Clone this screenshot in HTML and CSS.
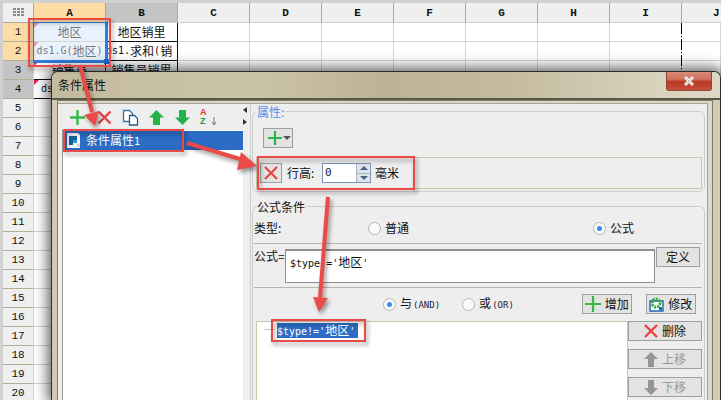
FILE: index.html
```html
<!DOCTYPE html>
<html lang="zh">
<head>
<meta charset="utf-8">
<title>条件属性</title>
<link rel="stylesheet" href="styles.css">
</head>
<body>
<div class="sheet">
  <div class="hd corner"><svg width="11" height="9" viewBox="0 0 11 9"><path fill="#8d8d8d" d="M0 0h3v2H0zM4 0h3v2H4zM8 0h3v2H8zM0 3h3v2H0zM4 3h3v2H4zM8 3h3v2H8zM0 6h3v2H0zM4 6h3v2H4zM8 6h3v2H8z"/></svg></div>
  <div class="hd col on">A</div><div class="hd col dim">B</div><div class="hd col">C</div><div class="hd col">D</div><div class="hd col">E</div><div class="hd col">F</div><div class="hd col">G</div><div class="hd col">H</div><div class="hd col">I</div><div class="hd col last">J</div>

  <div class="hd row on">1</div><div class="c sel flag-soft"><span class="cj">地区</span></div><div class="c tb"><span class="cj">地区销里</span></div><div class="c"></div><div class="c"></div><div class="c"></div><div class="c"></div><div class="c"></div><div class="c"></div><div class="c"></div><div class="c"></div>
  <div class="hd row on">2</div><div class="c sel flag-soft">ds1.G(<span class="cj">地区</span>)</div><div class="c tb clip">ds1.<span class="cj">求和</span>(<span class="cj">销</span></div><div class="c"></div><div class="c"></div><div class="c"></div><div class="c"></div><div class="c"></div><div class="c"></div><div class="c"></div><div class="c"></div>
  <div class="hd row dim">3</div><div class="c tb flag"><span class="cj">销售员</span></div><div class="c tb"><span class="cj">销售员销里</span></div><div class="c"></div><div class="c"></div><div class="c"></div><div class="c"></div><div class="c"></div><div class="c"></div><div class="c"></div><div class="c"></div>
  <div class="hd row dim">4</div><div class="c tb flag start">ds</div><div class="c tb"></div><div class="c"></div><div class="c"></div><div class="c"></div><div class="c"></div><div class="c"></div><div class="c"></div><div class="c"></div><div class="c"></div>

  <div class="hd row">5</div><div class="c"></div><div class="rest"></div>
  <div class="hd row">6</div><div class="c"></div><div class="rest"></div>
  <div class="hd row">7</div><div class="c"></div><div class="rest"></div>
  <div class="hd row">8</div><div class="c"></div><div class="rest"></div>
  <div class="hd row">9</div><div class="c"></div><div class="rest"></div>
  <div class="hd row">10</div><div class="c"></div><div class="rest"></div>
  <div class="hd row">11</div><div class="c"></div><div class="rest"></div>
  <div class="hd row">12</div><div class="c"></div><div class="rest"></div>
  <div class="hd row">13</div><div class="c"></div><div class="rest"></div>
  <div class="hd row">14</div><div class="c"></div><div class="rest"></div>
  <div class="hd row">15</div><div class="c"></div><div class="rest"></div>
  <div class="hd row">16</div><div class="c"></div><div class="rest"></div>
  <div class="hd row">17</div><div class="c"></div><div class="rest"></div>
  <div class="hd row">18</div><div class="c"></div><div class="rest"></div>
  <div class="hd row">19</div><div class="c"></div><div class="rest"></div>
  <div class="hd row">20</div><div class="c"></div><div class="rest"></div>
</div>
<div class="selection"><i class="handle"></i></div>
<div class="page-break"></div>

<section class="dialog">
  <header class="titlebar">
    <span class="title">条件属性</span>
    <span class="close"><svg width="12" height="10" viewBox="0 0 12 10"><path d="M2 1l8 8M10 1L2 9" stroke="#f4f4f4" stroke-width="3"/><path d="M2 1l8 8M10 1L2 9" stroke="#5d5d5d" stroke-width=".6" opacity=".5"/></svg></span>
  </header>
  <div class="client">
    <div class="panes">
      <div class="left">
        <div class="toolbar">
          <svg class="t1" width="17" height="17" viewBox="0 0 17 17"><path d="M8.5 1v15M1 8.5h15" stroke="#35b94a" stroke-width="2.4"/></svg>
          <svg class="t2" width="15" height="15" viewBox="0 0 15 15"><path d="M1.5 1.5l12 12M13.500 1.500l-12 12" stroke="#e8423c" stroke-width="2.4"/></svg>
          <svg class="t3" width="17" height="17" viewBox="0 0 17 17"><path d="M1.500 1.500h6l3 3v8h-9z" fill="#fff" stroke="#3c6f9e" stroke-width="1.300"/><path d="M7.500 6.500h5l3 3v6.500h-8z" fill="#fff" stroke="#2b5a86" stroke-width="1.300"/></svg>
          <svg class="t4" width="15" height="15" viewBox="0 0 15 15"><path d="M7.500 0L15 7.500h-4V15H4V7.500H0z" fill="#26b24a"/></svg>
          <svg class="t5" width="15" height="15" viewBox="0 0 15 15"><path d="M4 0h7v7.500h4L7.500 15 0 7.500h4z" fill="#26b24a"/></svg>
          <span class="az"><b class="az-a">A</b><b class="az-z">Z</b><svg width="6" height="9" viewBox="0 0 6 9"><path d="M3 0v8M1 5l2 3 2-3" stroke="#777" fill="none"/></svg></span>
        </div>
        <div class="tree">
          <div class="tree-sel">
            <svg width="15" height="15" viewBox="0 0 15 15"><path d="M1 0h11l2 2v13H1z" fill="#f4f6f8"/><path d="M3 3h8v4H7v5H3z" fill="#14609f"/><path d="M7 7h4v3H7z" fill="#27a0e0"/><path d="M11 11h3v3h-3z" fill="#d8d8d8"/></svg>
            <span>条件属性<span class="m">1</span></span>
          </div>
        </div>
      </div>
      <div class="splitter"><i class="arrow-l"></i><i class="arrow-r"></i></div>
      <div class="right">
        <div class="group attr">
          <div class="legend blue">属性:</div>
          <div class="add-menu btn"><svg width="14" height="14" viewBox="0 0 14 14"><path d="M7 0v14M0 7h14" stroke="#29b648" stroke-width="2.200"/></svg><i class="caret"></i></div>
          <div class="prop-row">
            <div class="btn del-x"><svg width="14" height="14" viewBox="0 0 14 14"><path d="M1 1l12 12M13 1L1 13" stroke="#e8423c" stroke-width="2"/></svg></div>
            <span class="lbl-h">行高:</span>
            <div class="spin">
              <span class="spin-val m">0</span>
              <span class="spin-btns"><i class="up"></i><i class="down"></i></span>
            </div>
            <span class="unit">毫米</span>
          </div>
        </div>
        <div class="group formula">
          <div class="legend">公式条件</div>
          <div class="type-row">
            <span class="type-lbl">类型:</span>
            <span class="radio r-a"></span><span>普通</span>
            <span class="radio on r-b"></span><span>公式</span>
          </div>
          <div class="rule r1"></div>
          <div class="formula-row">
            <span class="f-lbl">公式=</span>
            <div class="f-box"><span class="m">$type</span><span class="m">!='</span><span>地区</span><span class="m">'</span></div>
            <div class="btn f-def">定义</div>
          </div>
          <div class="rule r2"></div>
          <div class="logic-row">
            <span class="radio on l-a"></span><span class="l-t">与<span class="m small">(AND)</span></span>
            <span class="radio l-b"></span><span class="l-t">或<span class="m small">(OR)</span></span>
            <div class="btn act add"><svg width="16" height="16" viewBox="0 0 16 16"><path d="M8 0v16M0 8h16" stroke="#35b94a" stroke-width="2.200"/></svg><span>增加</span></div>
            <div class="btn act edit"><svg width="15" height="15" viewBox="0 0 15 15"><path d="M1 4h13v10H1z" fill="#fff" stroke="#1b68b0" stroke-width="1.400"/><circle cx="7" cy="6" r="4" fill="none" stroke="#36a83e" stroke-width="3" stroke-dasharray="2 1"/><path d="M10 10h3v3h-3z" fill="#1b68b0"/></svg><span>修改</span></div>
          </div>
          <div class="cond">
            <div class="cond-list">
              <i class="twig"></i><span class="cond-sel"><span class="m">$type!='</span>地区<span class="m">'</span></span>
            </div>
            <div class="side">
              <div class="btn side-btn"><svg width="14" height="14" viewBox="0 0 14 14"><path d="M1 1l12 12M13 1L1 13" stroke="#e8423c" stroke-width="2.300"/></svg><span>删除</span></div>
              <div class="btn side-btn off"><svg width="14" height="15" viewBox="0 0 14 15"><path d="M7 0l7 7h-4v8H4V7H0z" fill="#959595"/></svg><span>上移</span></div>
              <div class="btn side-btn off"><svg width="14" height="15" viewBox="0 0 14 15"><path d="M4 0h6v8h4l-7 7-7-7h4z" fill="#959595"/></svg><span>下移</span></div>
            </div>
          </div>
        </div>
      </div>
    </div>
  </div>
</section>

<svg class="notes" width="721" height="400" viewBox="0 0 721 400">
  <g class="note-shapes">
    <rect x="29" y="19" width="81" height="47"/>
    <rect x="64" y="130" width="119" height="21"/>
    <rect x="258" y="157" width="156" height="32"/>
    <rect x="272" y="320" width="93" height="21"/>
    <path class="shaft" d="M80 65L92 112"/>
    <path class="head" d="M84 115L99 111L95 126z"/>
    <path class="shaft" d="M187 143L243 160"/>
    <path class="head" d="M241 152L257 166L237 170z"/>
    <path class="shaft" d="M328 197L320 298"/>
    <path class="head" d="M313 297L328 298L319 312z"/>
  </g>
</svg>
</body>
</html>
```
FILE: styles.css
```css
html, body { margin: 0; padding: 0; }
body {
  position: relative;
  width: 721px;
  height: 400px;
  overflow: hidden;
  background: #d0d0d0;
  font: 12px/14px "Noto Sans CJK SC", sans-serif;
  color: #111;
}
i { display: block; }
svg { display: block; flex: none; }
.m { font-family: "DejaVu Sans Mono", monospace; font-size: 10px; }
.small { font-size: 9px; color: #223; }
.cj { font-family: "Noto Sans CJK SC", sans-serif; font-size: 12px; }

/* spreadsheet */
.sheet {
  display: grid;
  grid-template-columns: 31px repeat(9, 72px) 39px;
  grid-template-rows: 20px repeat(20, 19px);
  padding: 3px 0 0 3px;
  font: 10px/14px "DejaVu Sans Mono", monospace;
  background: #d0d0d0;
}
.hd {
  box-sizing: border-box;
  display: flex;
  align-items: center;
  justify-content: center;
  background: #efefef;
  border-right: 1px solid #a9a89a;
  border-bottom: 1px solid #a9a89a;
  color: #111;
  font-family: "Liberation Mono", monospace;
  font-size: 11px;
}
.col { border-bottom-color: #d0d0d0; font-weight: bold; }
.row { border-right-color: #d4d4d4; border-bottom-color: #b3b09a; }
.hd.on { background: #fddca6; }
.hd.dim { background: #c4c4c4; }
.last { justify-content: flex-start; padding-left: 31px; border-right: 0; }
.corner { border-right-color: #a9a89a; }
.c {
  box-sizing: border-box;
  display: flex;
  align-items: center;
  justify-content: center;
  position: relative;
  overflow: hidden;
  white-space: nowrap;
  background: #fff;
  border-right: 1px solid #d4d4d4;
  border-bottom: 1px solid #d4d4d4;
}
.rest { grid-column: span 9; }
.sel { background: #eaf3fd; color: #777; }
.sel .cj { color: #777; }
.tb { border-right-color: #111; border-bottom-color: #111; color: #111; }
.clip { justify-content: flex-start; }
.start { justify-content: flex-start; padding-left: 7px; }
.flag::before, .flag-soft::before {
  content: "";
  position: absolute;
  left: 0;
  top: 0;
  border-top: 5px solid #e0204a;
  border-right: 5px solid transparent;
}
.flag-soft::before { border-top-color: #e8a0b8; }
.selection {
  position: absolute;
  left: 33px;
  top: 22px;
  width: 71px;
  height: 37px;
  border: solid #2f7de0;
  border-width: 1px 3px 3px 1px;
}
.handle {
  position: absolute;
  right: -4px;
  bottom: -4px;
  width: 5px;
  height: 5px;
  background: #1c6fd8;
  border: 0;
}
.page-break {
  position: absolute;
  left: 681px;
  top: 23px;
  width: 1px;
  height: 48px;
  background: repeating-linear-gradient(#000 0 11px, transparent 11px 13px, #000 13px 14px, transparent 14px 16px);
}

/* dialog window */
.dialog {
  position: absolute;
  left: 51px;
  top: 71px;
  box-sizing: border-box;
  width: 670px;
  height: 329px;
  display: flex;
  flex-direction: column;
  overflow: hidden;
  border: 1px solid #2c2c2c;
  border-bottom: 0;
  border-radius: 7px 7px 0 0;
  background: #d2cbb2;
  box-shadow: 0 0 14px 3px rgba(0, 0, 0, .65);
}
.titlebar {
  flex: none;
  box-sizing: border-box;
  height: 28px;
  display: flex;
  align-items: flex-start;
  padding-left: 6px;
  background: linear-gradient(90deg, #c4bb9f 0, #cbc3a8 30%, #bcb296 50%, #c5bca0 70%, #d8d2bb 90%, #ddd8c6 100%);
  border-bottom: 2px solid #5a5848;
}
.title { margin-top: 6px; font-size: 12px; line-height: 14px; color: #111; }
.close {
  box-sizing: border-box;
  margin-left: auto;
  margin-right: 8px;
  width: 46px;
  height: 19px;
  display: flex;
  align-items: center;
  justify-content: center;
  border: 1px solid #8a4a3a;
  border-top: 0;
  border-radius: 0 0 3px 3px;
  background: linear-gradient(#d98a78 0, #d0705c 40%, #b83522 55%, #c9523c 100%);
}
.client {
  flex: 1;
  min-height: 0;
  box-sizing: border-box;
  margin: 0 7px 0 5px;
  padding: 2px 4px 0 0;
  border: 1px solid #7d7b6c;
  border-bottom: 0;
  background: #ddd8c4;
  display: flex;
}
.panes {
  flex: 1;
  display: flex;
  background: #eee;
  border-top: 1px solid #a5a395;
  border-right: 1px solid #a5a395;
  overflow: hidden;
}
.left {
  flex: none;
  width: 185px;
  display: flex;
  flex-direction: column;
  padding-left: 4px;
  box-sizing: border-box;
}
.toolbar {
  flex: none;
  height: 26px;
  display: flex;
  align-items: center;
  box-sizing: border-box;
}
.t1 { margin-left: 7px; }
.t2 { margin-left: 11px; }
.t3 { margin-left: 10px; }
.t4 { margin-left: 10px; }
.t5 { margin-left: 11px; }
.az {
  margin-left: 10px;
  width: 18px;
  height: 18px;
  display: grid;
  grid-template-columns: 11px 6px;
  grid-template-rows: 9px 9px;
  align-items: center;
  font: bold 9px/9px "Liberation Sans", sans-serif;
}
.az-a { color: #d33; grid-column: 1; grid-row: 1; }
.az-z { color: #1a9a3a; grid-column: 1; grid-row: 2; }
.az svg { grid-column: 2; grid-row: 2; }
.tree {
  flex: 1;
  background: #fff;
  border-left: 1px solid #9c9c9c;
}
.tree-sel {
  margin-top: 1px;
  height: 19px;
  display: flex;
  align-items: center;
  gap: 5px;
  padding-left: 3px;
  background: #2b6cc4;
  color: #fff;
}
.splitter {
  flex: none;
  width: 7px;
  padding-top: 3px;
  box-sizing: border-box;
}
.arrow-l, .arrow-r {
  width: 0;
  height: 0;
  border-top: 3px solid transparent;
  border-bottom: 3px solid transparent;
}
.arrow-l { border-right: 4px solid #333; }
.arrow-r { margin-top: 6px; border-left: 4px solid #333; }
.right {
  flex: 1;
  min-width: 0;
  border-left: 1px solid #cfcfcf;
  padding-left: 1px;
}
.group {
  box-sizing: border-box;
  width: 453px;
  border: 1px solid #cdcdcd;
  border-radius: 6px;
}
.attr { margin-top: 7px; height: 81px; }
.legend {
  width: fit-content;
  height: 14px;
  margin: -7px 0 0 3px;
  padding: 0 1px;
  background: #eee;
  color: #111;
}
.blue { color: #5a8fe8; }
.btn {
  box-sizing: border-box;
  display: flex;
  align-items: center;
  justify-content: center;
  background: #e3e3e3;
  border: 1px solid #9f9f9f;
}
.add-menu {
  margin: 9px 0 0 10px;
  width: 30px;
  height: 20px;
  gap: 1px;
  padding-left: 2px;
}
.caret {
  border-top: 4px solid #555;
  border-left: 4px solid transparent;
  border-right: 4px solid transparent;
}
.prop-row {
  box-sizing: border-box;
  margin: 9px 0 0 3px;
  width: 446px;
  height: 32px;
  display: flex;
  align-items: center;
  padding-left: 3px;
  border: 1px solid #c9c7b0;
}
.del-x { width: 22px; height: 20px; }
.lbl-h { margin-left: 5px; width: 35px; }
.spin {
  box-sizing: border-box;
  width: 49px;
  height: 20px;
  display: flex;
  border: 1px solid #7f94b5;
  background: #fff;
}
.spin-val { flex: 1; padding: 2px 0 0 2px; font-size: 11px; color: #123; }
.spin-btns { width: 14px; display: flex; flex-direction: column; background: #dfe4ec; }
.up, .down {
  flex: 1;
  display: flex;
  align-items: center;
  justify-content: center;
  border-left: 1px solid #aab4c4;
}
.up { border-bottom: 1px solid #aab4c4; }
.up::before { content: ""; border-bottom: 4px solid #4a6288; border-left: 4px solid transparent; border-right: 4px solid transparent; }
.down::before { content: ""; border-top: 4px solid #4a6288; border-left: 4px solid transparent; border-right: 4px solid transparent; }
.unit { margin-left: 4px; }
.formula {
  margin-top: 14px;
  height: 240px;
  border-bottom: 0;
  border-radius: 6px 6px 0 0;
}
.type-row {
  margin-top: 7px;
  height: 14px;
  display: flex;
  align-items: center;
  padding-left: 1px;
}
.type-lbl { width: 114px; }
.radio {
  flex: none;
  box-sizing: border-box;
  width: 13px;
  height: 13px;
  margin-right: 4px;
  border: 1px solid #b5b5b5;
  border-radius: 50%;
  background: #fafafa;
  display: flex;
  align-items: center;
  justify-content: center;
}
.radio.on::before { content: ""; width: 5px; height: 5px; border-radius: 50%; background: #3d8bf2; }
.r-b { margin-left: 184px; }
.rule { margin-left: 1px; width: 448px; height: 1px; background: #b7b5a6; }
.r1 { margin-top: 8px; }
.r2 { margin-top: 4px; }
.formula-row { height: 39px; display: flex; align-items: flex-start; padding-left: 1px; }
.f-lbl { width: 31px; margin-top: 5px; white-space: nowrap; }
.f-box {
  box-sizing: border-box;
  margin-top: 5px;
  width: 370px;
  height: 34px;
  padding: 4px 0 0 4px;
  background: #fff;
  border: 1px solid #8f8f8f;
  border-top: 2px solid #8f8f8f;
  white-space: nowrap;
}
.f-def { margin: 3px 0 0 1px; width: 44px; height: 20px; }
.logic-row {
  box-sizing: border-box;
  height: 26px;
  padding-top: 6px;
  display: flex;
  align-items: center;
}
.l-a { margin-left: 130px; }
.l-t { white-space: nowrap; }
.l-t .m { margin-left: 1px; }
.l-b { margin-left: 22px; }
.act { width: 50px; height: 20px; gap: 4px; }
.add { margin-left: 68px; }
.edit { margin-left: 14px; }
.cond { margin-top: 7px; display: flex; height: 90px; }
.cond-list {
  box-sizing: border-box;
  margin-left: 3px;
  width: 372px;
  height: 90px;
  display: flex;
  align-items: flex-start;
  background: #fff;
  border-top: 1px solid #c9c7b0;
  border-left: 1px solid #c9c7b0;
  border-right: 1px solid #c9c7b0;
}
.twig { width: 11px; height: 1px; margin: 7px 0 0 7px; background: #c9c7b0; flex: none; }
.cond-sel {
  margin: 1px 0 0 2px;
  width: 81px;
  height: 15px;
  background: #2b6cc4;
  color: #fff;
  white-space: nowrap;
}
.side { display: flex; flex-direction: column; gap: 8px; }
.side-btn { width: 74px; height: 20px; gap: 4px; }
.off { color: #999; }

/* callouts */
.notes { position: absolute; left: 0; top: 0; pointer-events: none; }
.note-shapes { filter: drop-shadow(2px 3px 2px rgba(0, 0, 0, .4)); }
.note-shapes rect { fill: none; stroke: #ea4b48; stroke-width: 2; }
.shaft { fill: none; stroke: #ea4b48; stroke-width: 4; }
.head { fill: #ea4b48; }
```
